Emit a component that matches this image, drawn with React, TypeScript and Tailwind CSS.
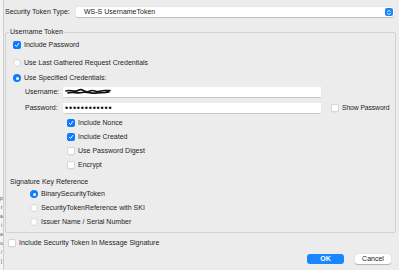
import React from 'react';

const font = { fontFamily: '"Liberation Sans", Arial, sans-serif' };

const CheckBox = ({ checked }: { checked?: boolean }) =>
  checked ? (
    <span className="flex h-[8px] w-[8px] shrink-0 items-center justify-center rounded-[2px] bg-[#0a7cff]">
      <svg width="6" height="6" viewBox="0 0 12 12">
        <path d="M2.5 6.5 L5 9 L9.5 3" fill="none" stroke="#fff" strokeWidth="2" strokeLinecap="round" strokeLinejoin="round" />
      </svg>
    </span>
  ) : (
    <span className="h-[8px] w-[8px] shrink-0 rounded-[2px] border border-[#d6d6d6] bg-white shadow-[0_0.5px_0.5px_rgba(0,0,0,0.08)]" />
  );

const Radio = ({ checked }: { checked?: boolean }) =>
  checked ? (
    <span className="flex h-[8px] w-[8px] shrink-0 items-center justify-center rounded-full bg-[#0a7cff]">
      <span className="h-[3px] w-[3px] rounded-full bg-white" />
    </span>
  ) : (
    <span className="h-[8px] w-[8px] shrink-0 rounded-full border border-[#d6d6d6] bg-white" />
  );

const Row = ({ className, children }: { className: string; children: React.ReactNode }) => (
  <div className={`flex h-[10px] items-center gap-[3px] ${className}`}>{children}</div>
);

export default function App() {
  return (
    <div className="flex h-[270px] w-[399px] overflow-hidden bg-[#ececec] text-[7px] leading-[10px] text-[#1e1e1e]" style={font}>
      {/* sliver of the window behind the sheet */}
      <div className="flex w-[4px] shrink-0 flex-col items-center border-r border-[#cdcdcd] bg-[#f4f4f4] pt-[194px] text-[5px] leading-[9px] text-[#555]">
        <span>p</span>
        <span>r</span>
        <span>a</span>
        <span>i</span>
        <span>a</span>
        <span>u</span>
        <span>/</span>
        <span>]</span>
      </div>

      <div className="flex min-w-0 flex-1 flex-col">
        {/* token type */}
        <div className="mt-[7px] flex h-[10px] items-center pl-[1px] pr-[5px]">
          <span className="w-[71px] shrink-0">Security Token Type:</span>
          <div className="flex h-[10px] flex-1 items-center justify-between rounded-[2px] bg-white pl-[8px] pr-[1px] shadow-[0_0.5px_1px_rgba(0,0,0,0.2)]">
            <span>WS-S UsernameToken</span>
            <span className="flex h-[8px] w-[8px] items-center justify-center rounded-[2px] bg-[#1a84ff]">
              <svg width="6" height="7" viewBox="0 0 12 14">
                <path d="M3 5.5 L6 2.5 L9 5.5 M3 8.5 L6 11.5 L9 8.5" fill="none" stroke="#fff" strokeWidth="1.8" strokeLinecap="round" strokeLinejoin="round" />
              </svg>
            </span>
          </div>
        </div>

        {/* username token group */}
        <fieldset className="ml-[1px] mr-[3px] mt-[10px] flex flex-col rounded-[2px] border border-[#d2d2d2] pb-[5px]">
          <legend className="ml-[3px] px-[1px] leading-[10px]">Username Token</legend>
          <Row className="ml-[7px] mt-[3px]">
            <CheckBox checked />
            <span>Include Password</span>
          </Row>
          <Row className="ml-[7px] mt-[8px]">
            <Radio />
            <span>Use Last Gathered Request Credentials</span>
          </Row>
          <Row className="ml-[7px] mt-[5px]">
            <Radio checked />
            <span>Use Specified Credentials:</span>
          </Row>
          <div className="ml-[19px] mt-[4px] flex h-[10px] items-center">
            <span className="w-[38px] shrink-0">Username:</span>
            <div className="flex h-[10px] w-[258px] items-center bg-white pl-[2px] shadow-[0_0.5px_1px_rgba(0,0,0,0.15)]">
              <svg width="46" height="8" viewBox="0 0 46 8">
                <path d="M1 3 C6 1 9 5 14 2 C18 0 20 6 25 3 C29 1 31 5 36 3 C39 2 42 3 45 2.5 M3 5 C8 3 12 6 17 4.5 C22 3 26 6 32 5 C36 4.5 40 5 44 4" fill="none" stroke="#111" strokeWidth="1.6" strokeLinecap="round" />
              </svg>
            </div>
          </div>
          <div className="ml-[19px] mt-[6px] flex h-[10px] items-center">
            <span className="w-[38px] shrink-0">Password:</span>
            <div className="flex h-[10px] w-[258px] items-center overflow-hidden bg-white pl-[2px] text-[9px] tracking-[0.8px] text-[#111] shadow-[0_0.5px_1px_rgba(0,0,0,0.15)]">
              ••••••••••••
            </div>
            <div className="ml-[10px] flex items-center gap-[3px] text-[6.8px] tracking-[-0.1px]">
              <CheckBox />
              <span>Show Password</span>
            </div>
          </div>
          <Row className="ml-[61px] mt-[5px]">
            <CheckBox checked />
            <span>Include Nonce</span>
          </Row>
          <Row className="ml-[61px] mt-[4px]">
            <CheckBox checked />
            <span>Include Created</span>
          </Row>
          <Row className="ml-[61px] mt-[4px]">
            <CheckBox />
            <span>Use Password Digest</span>
          </Row>
          <Row className="ml-[61px] mt-[4px]">
            <CheckBox />
            <span>Encrypt</span>
          </Row>
          <div className="ml-[4px] mt-[7px] h-[10px]">Signature Key Reference</div>
          <Row className="ml-[24px] mt-[2px]">
            <Radio checked />
            <span>BinarySecurityToken</span>
          </Row>
          <Row className="ml-[24px] mt-[4px]">
            <Radio />
            <span>SecurityTokenReference with SKI</span>
          </Row>
          <Row className="ml-[24px] mt-[4px]">
            <Radio />
            <span>Issuer Name / Serial Number</span>
          </Row>
        </fieldset>

        <Row className="ml-[4px] mt-[5px]">
          <CheckBox />
          <span>Include Security Token In Message Signature</span>
        </Row>

        <div className="mr-[8px] mt-[6px] flex justify-end gap-[11px]">
          <button className="h-[10px] w-[37px] rounded-[3px] bg-[#1a86ff] text-[7px] font-bold leading-[10px] text-white">OK</button>
          <button className="h-[10px] w-[36px] rounded-[3px] bg-white text-[7px] leading-[10px] text-[#222] shadow-[0_0.5px_1px_rgba(0,0,0,0.25)]">Cancel</button>
        </div>
      </div>
    </div>
  );
}
